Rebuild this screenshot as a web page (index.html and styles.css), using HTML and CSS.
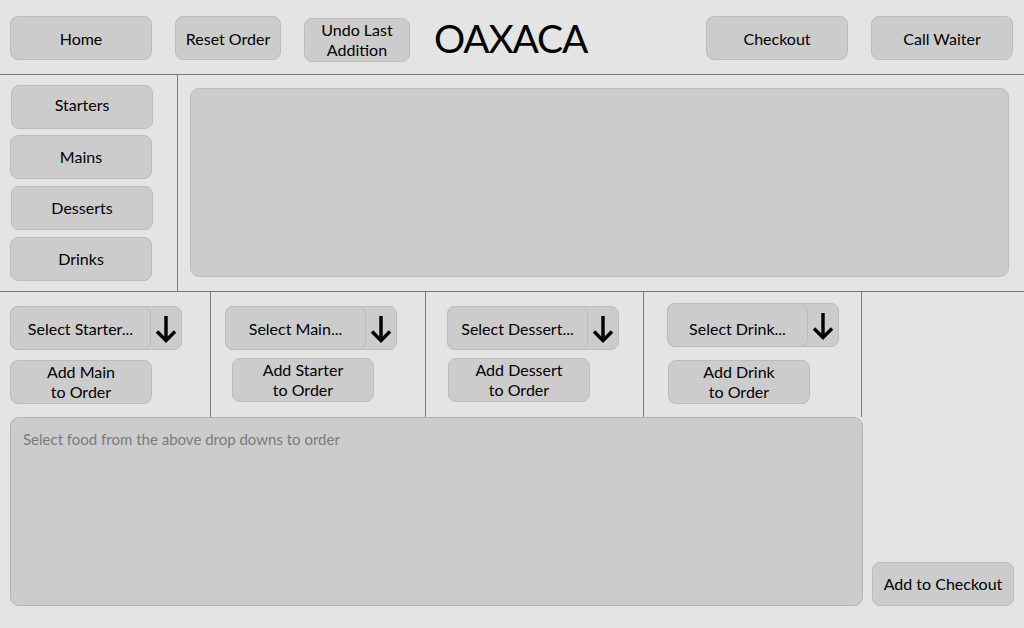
FILE: index.html
```html
<!DOCTYPE html>
<html>
<head>
<meta charset="utf-8">
<link rel="stylesheet" href="styles.css">
<title>OAXACA</title>
</head>
<body>
<div class="page">
  <header class="top">
    <button class="btn home">Home</button>
    <button class="btn reset">Reset Order</button>
    <button class="btn undo">Undo Last<br>Addition</button>
    <h1 class="logo">OAXACA</h1>
    <button class="btn checkout">Checkout</button>
    <button class="btn waiter">Call Waiter</button>
  </header>

  <section class="middle">
    <nav class="side">
      <button class="btn cat c1">Starters</button>
      <button class="btn cat c2">Mains</button>
      <button class="btn cat c3">Desserts</button>
      <button class="btn cat c4">Drinks</button>
    </nav>
    <div class="panel-wrap">
      <div class="panel"></div>
    </div>
  </section>

  <section class="lower">
    <div class="cols">
      <div class="col col1">
        <div class="select s1">
          <span class="select-label">Select Starter...</span>
          <span class="arrow"><svg width="22" height="28" viewBox="0 0 22 28"><path d="M11 1V25.5M2 16.5L11 25.5L20 16.5" fill="none" stroke="#000" stroke-width="3.4"/></svg></span>
        </div>
        <button class="btn add a1">Add Main<br>to Order</button>
      </div>
      <div class="col col2">
        <div class="select s2">
          <span class="select-label">Select Main...</span>
          <span class="arrow"><svg width="22" height="28" viewBox="0 0 22 28"><path d="M11 1V25.5M2 16.5L11 25.5L20 16.5" fill="none" stroke="#000" stroke-width="3.4"/></svg></span>
        </div>
        <button class="btn add a2">Add Starter<br>to Order</button>
      </div>
      <div class="col col3">
        <div class="select s3">
          <span class="select-label">Select Dessert...</span>
          <span class="arrow"><svg width="22" height="28" viewBox="0 0 22 28"><path d="M11 1V25.5M2 16.5L11 25.5L20 16.5" fill="none" stroke="#000" stroke-width="3.4"/></svg></span>
        </div>
        <button class="btn add a3">Add Dessert<br>to Order</button>
      </div>
      <div class="col col4">
        <div class="select s4">
          <span class="select-label drink">Select Drink...</span>
          <span class="arrow"><svg width="22" height="28" viewBox="0 0 22 28"><path d="M11 1V25.5M2 16.5L11 25.5L20 16.5" fill="none" stroke="#000" stroke-width="3.4"/></svg></span>
        </div>
        <button class="btn add a4">Add Drink<br>to Order</button>
      </div>
    </div>
    <div class="bottom">
      <div class="order">Select food from the above drop downs to order</div>
      <button class="btn tocheckout">Add to Checkout</button>
    </div>
  </section>
</div>
</body>
</html>
```
FILE: styles.css
```css
* { box-sizing: border-box; }
html, body { margin: 0; padding: 0; }
body {
  background: #e4e4e4;
  font-family: "Lato", "Open Sans", sans-serif;
  color: #000;
}
.page {
  width: 1024px;
  height: 628px;
  overflow: hidden;
}
.btn {
  font-family: inherit;
  font-size: 16px;
  color: #000;
  background: #cdcccd;
  border: 1px solid #bcbcbc;
  border-radius: 8px;
  width: 142px;
  height: 44px;
  padding: 0;
  line-height: 20px;
  text-align: center;
  display: flex;
  align-items: center;
  justify-content: center;
  flex-shrink: 0;
}

/* header */
.top {
  height: 75px;
  border-bottom: 1px solid #7a7a7a;
  display: flex;
  align-items: flex-start;
  padding-top: 16px;
}
.home { margin-left: 10px; padding-top: 1px; }
.reset { margin-left: 23px; width: 106px; padding-top: 1px; }
.undo { margin-left: 23px; width: 106px; margin-top: 2px; }
.logo {
  margin: 0 0 0 24px;
  font-weight: 400;
  font-size: 39px;
  letter-spacing: -1.2px;
  line-height: 44px;
  margin-top: 0;
  color: #000;
}
.checkout { margin-left: auto; padding-top: 1px; }
.waiter { margin-left: 23px; margin-right: 11px; padding-top: 1px; }

/* middle */
.middle {
  height: 217px;
  border-bottom: 1px solid #7a7a7a;
  display: flex;
}
.side {
  width: 178px;
  border-right: 1px solid #7a7a7a;
  display: flex;
  flex-direction: column;
  padding-top: 10px;
}
.cat { margin-left: 10px; }
.c1 { margin-left: 11px; padding-bottom: 4px; }
.c2 { margin-top: 6px; }
.c3 { margin-top: 7px; margin-left: 11px; }
.c4 { margin-top: 7px; }
.panel-wrap {
  flex: 1;
  padding: 13px 15px 0 12px;
}
.panel {
  height: 189px;
  background: #cdcccd;
  border: 1px solid #bcbcbc;
  border-radius: 9px;
}

/* lower */
.lower {
  display: flex;
  flex-direction: column;
}
.cols {
  display: flex;
  height: 125px;
}
.col {
  border-right: 1px solid #7a7a7a;
  display: flex;
  flex-direction: column;
  align-items: flex-start;
}
.col1 { width: 211px; }
.col2 { width: 215px; }
.col3 { width: 218px; }
.col4 { width: 218px; }

.select {
  width: 172px;
  height: 44px;
  background: #cdcccd;
  border: 1px solid #bcbcbc;
  border-radius: 8px;
  display: flex;
  align-items: stretch;
}
.select-label {
  width: 141px;
  margin: -1px 0 -1px -1px;
  border: 1px solid #bcbcbc;
  border-radius: 8px;
  display: flex;
  align-items: center;
  justify-content: center;
  font-size: 16px;
}
.select-label.drink { padding-top: 6px; }
.arrow {
  flex: 1;
  display: flex;
  align-items: center;
  justify-content: center;
  padding-top: 1px;
}
.arrow svg { display: block; }

.s1 { margin: 14px 0 0 10px; }
.a1 { margin: 10px 0 0 10px; }
.s2 { margin: 14px 0 0 14px; }
.a2 { margin: 8px 0 0 21px; }
.s3 { margin: 14px 0 0 21px; }
.a3 { margin: 8px 0 0 22px; }
.s4 { margin: 11px 0 0 23px; }
.a4 { margin: 13px 0 0 24px; }

.bottom {
  display: flex;
  align-items: flex-end;
  padding-left: 10px;
}
.order {
  width: 853px;
  height: 189px;
  background: #cdcccd;
  border: 1px solid #b4b4b4;
  border-radius: 9px;
  color: #7a7a7a;
  font-size: 15px;
  padding: 12px 0 0 12px;
}
.tocheckout { margin-left: 9px; }
```
